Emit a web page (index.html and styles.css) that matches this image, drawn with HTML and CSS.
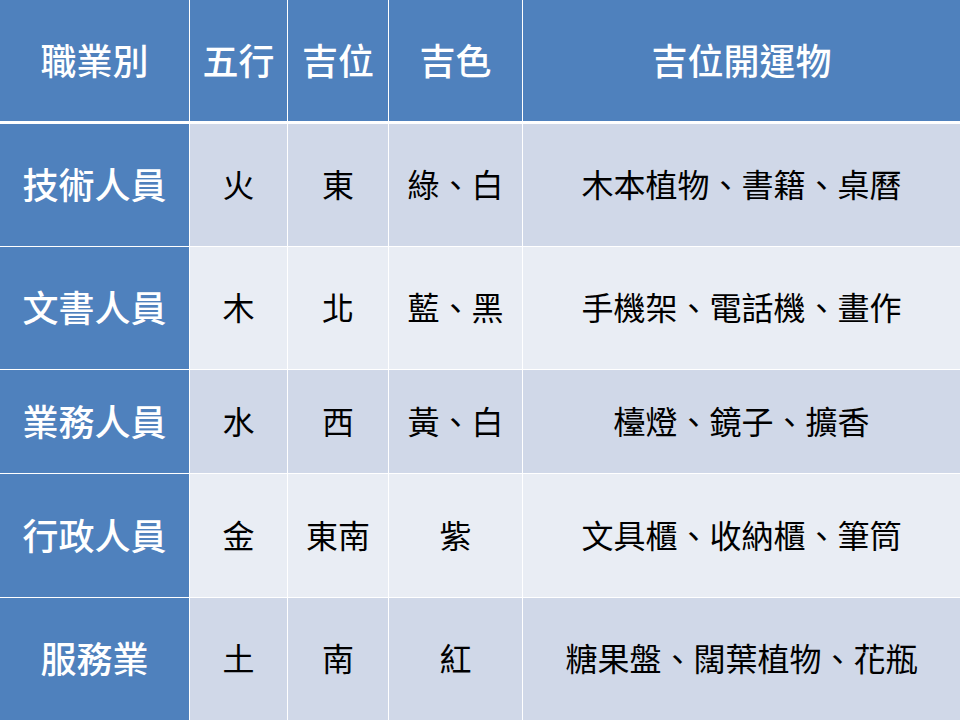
FILE: index.html
```html
<!DOCTYPE html>
<html lang="zh-Hant">
<head>
<meta charset="utf-8">
<title>職業別吉位</title>
<link rel="stylesheet" href="styles.css">
</head>
<body>
<div class="table">
  <div class="cell head">職業別</div>
  <div class="cell head">五行</div>
  <div class="cell head">吉位</div>
  <div class="cell head">吉色</div>
  <div class="cell head">吉位開運物</div>

  <div class="cell first">技術人員</div>
  <div class="cell odd">火</div>
  <div class="cell odd">東</div>
  <div class="cell odd">綠、白</div>
  <div class="cell odd">木本植物、書籍、桌曆</div>

  <div class="cell first">文書人員</div>
  <div class="cell even">木</div>
  <div class="cell even">北</div>
  <div class="cell even">藍、黑</div>
  <div class="cell even">手機架、電話機、畫作</div>

  <div class="cell first">業務人員</div>
  <div class="cell odd">水</div>
  <div class="cell odd">西</div>
  <div class="cell odd">黃、白</div>
  <div class="cell odd">檯燈、鏡子、擴香</div>

  <div class="cell first">行政人員</div>
  <div class="cell even">金</div>
  <div class="cell even">東南</div>
  <div class="cell even">紫</div>
  <div class="cell even">文具櫃、收納櫃、筆筒</div>

  <div class="cell first">服務業</div>
  <div class="cell odd">土</div>
  <div class="cell odd">南</div>
  <div class="cell odd">紅</div>
  <div class="cell odd">糖果盤、闊葉植物、花瓶</div>
</div>
</body>
</html>
```

FILE: styles.css
```css
html, body {
  margin: 0;
  padding: 0;
  background: #ffffff;
}

body {
  font-family: "Noto Sans CJK TC", "Noto Sans", sans-serif;
  width: 960px;
  height: 720px;
  overflow: hidden;
}

.table {
  display: grid;
  grid-template-columns: 189px 97px 100px 133px 437px;
  grid-template-rows: 123px 122px 122px 103px 123px 122px;
  column-gap: 1px;
  row-gap: 1px;
  background: #ffffff;
  width: 960px;
  height: 720px;
}

.cell {
  display: flex;
  align-items: center;
  justify-content: center;
  white-space: nowrap;
  line-height: 1;
  padding-bottom: 4px;
  box-sizing: border-box;
}

.head {
  background: #4f81bd;
  color: #ffffff;
  font-size: 36px;
  font-weight: 500;
  margin-bottom: 2px;
}

.first {
  background: #4f81bd;
  color: #ffffff;
  font-size: 36px;
  font-weight: 500;
}

.odd {
  background: #d0d8e8;
  color: #000000;
  font-size: 32px;
}

.even {
  background: #e9edf4;
  color: #000000;
  font-size: 32px;
}
```
